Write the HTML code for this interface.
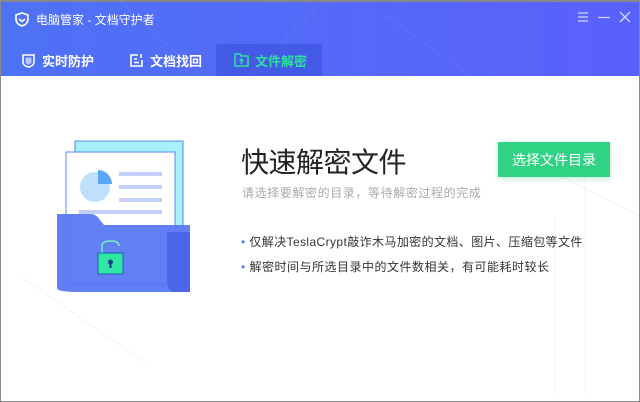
<!DOCTYPE html>
<html><head><meta charset="utf-8"><style>
*{margin:0;padding:0;box-sizing:border-box}
body{width:640px;height:402px;overflow:hidden;background:#fff;font-family:"Liberation Sans","Noto Sans CJK SC",sans-serif;position:relative}
.frame{position:absolute;inset:0;border:1px solid #8a8a8a;border-top:2px solid #888}
.hdr{position:absolute;left:1px;top:2px;width:638px;height:74px;background:linear-gradient(90deg,#4e72f6,#5a60fb);overflow:hidden}
.t{position:absolute;color:#fff;white-space:nowrap}
.tab{position:absolute;top:42px;height:32px;font-size:13px;font-weight:bold;color:#fff;display:flex;align-items:center}
.act{left:215px;width:106px;background:rgba(40,60,200,.35);color:#2ee0a0;padding-left:18px}
.main{position:absolute;color:#333;white-space:nowrap}
</style></head><body>
<div class="hdr">
<svg style="position:absolute;left:0;top:0" width="638" height="74"><g stroke="rgba(255,255,255,.08)" fill="none"><path d="M120 0 L200 74M250 74 L320 0M380 10 L470 74"/></g></svg>
<svg style="position:absolute;left:14px;top:10px" width="14" height="15" viewBox="0 0 14 15"><path d="M7 1 L13 3 V7 C13 11 10 13 7 14 C4 13 1 11 1 7 V3 Z" fill="none" stroke="#fff" stroke-width="1.6"/><path d="M4 7 L7 9.5 L10 7" fill="none" stroke="#fff" stroke-width="1.5"/></svg>
<div class="t" style="left:35px;top:9px;font-size:12px">电脑管家 - 文档守护者</div>
<svg style="position:absolute;left:574px;top:8px" width="60" height="14"><g stroke="#fff" stroke-opacity=".75" stroke-width="1.3" fill="none"><path d="M3 3 H13 M3 7 H13 M3 11 H13 M23 7.5 H35 M45 2 L55 12 M55 2 L45 12"/></g></svg>
<div class="tab" style="left:20px"><svg width="15" height="15" viewBox="0 0 15 15" style="margin-right:6px"><path d="M2 2 H13 V9 C13 12 10 13.5 7.5 14 C5 13.5 2 12 2 9 Z" fill="none" stroke="#fff" stroke-width="1.6"/><path d="M4.5 4.5 H10.5 V9 C10.5 10.5 9 11.5 7.5 11.8 C6 11.5 4.5 10.5 4.5 9Z" fill="#fff" opacity=".6"/></svg>实时防护</div>
<div class="tab" style="left:128px"><svg width="15" height="15" viewBox="0 0 15 15" style="margin-right:6px"><path d="M9 2 H2 V13 H13 V7" fill="none" stroke="#fff" stroke-width="1.6"/><path d="M5 6 H8 M5 9.5 H10 M12 1 V5" stroke="#fff" stroke-width="1.6"/></svg>文档找回</div>
<div class="tab act"><svg width="15" height="14" viewBox="0 0 15 14" style="margin-right:6px"><path d="M1 1 H6 L7 3 H14 V13 H1 Z" fill="none" stroke="#2ee0a0" stroke-width="1.6"/><path d="M7.5 11 V6 M5.5 8 L7.5 6 L9.5 8" stroke="#2ee0a0" stroke-width="1.5" fill="none"/></svg>文件解密</div>
</div>
<svg style="position:absolute;left:0;top:76px" width="640" height="326"><g stroke="#f3f4fa" fill="none"><path d="M20 200 L150 290M560 100 L640 140M555 140 L555 320M585 90 V320"/></g></svg>
<svg style="position:absolute;left:55px;top:140px" width="140" height="160" viewBox="55 140 140 160">
<rect x="75" y="141" width="108" height="144" fill="#a8f0fb" stroke="#5a84f5" stroke-width="1"/>
<rect x="66" y="152" width="109" height="132" fill="#fff" stroke="#5a84f5" stroke-width="1"/>
<circle cx="95" cy="187" r="15" fill="#bfe0fd"/>
<path d="M98 170 A14 14 0 0 1 112 184 H98 Z" fill="#5aa8f5"/>
<g fill="#c5cdfb"><rect x="119" y="172" width="43" height="4"/><rect x="119" y="185" width="43" height="4"/><rect x="119" y="198" width="43" height="4"/><rect x="79" y="210" width="83" height="4"/></g>
<path d="M57 214 H90 C95 214 97 216 100 220 L104 225 H190 V292 H80 Q57 292 57 288 Z" fill="#5a78f5" opacity=".95"/>
<path d="M167 232 V282 Q168 292 176 292 H190 V232 Z" fill="#4b66ea"/>
<path d="M102 253 V246 Q102 241 111 241 Q119 241 119 246" fill="none" stroke="#6ff0c8" stroke-width="1.5"/>
<rect x="98" y="253" width="25" height="21" fill="#2fe6a3" stroke="#1c5fb0" stroke-width="1"/>
<circle cx="110.5" cy="262" r="2.5" fill="#1a3c8a"/><rect x="109.5" y="263" width="2" height="5" fill="#1a3c8a"/>
</svg>
<div class="main" style="left:241px;top:141px;font-size:28px;color:#222;letter-spacing:-0.5px">快速解密文件</div>
<div style="position:absolute;left:498px;top:142px;width:112px;height:35px;background:#30d383;color:#fff;font-size:14px;display:flex;align-items:center;justify-content:center;box-shadow:0 2px 6px rgba(48,211,131,.3)">选择文件目录</div>
<div class="main" style="left:242px;top:184px;font-size:12px;color:#aaa;letter-spacing:0.6px">请选择要解密的目录，等待解密过程的完成</div>
<div class="main" style="left:241px;top:233px;font-size:12px;letter-spacing:0.4px"><span style="color:#5a78f5">•</span> 仅解决TeslaCrypt敲诈木马加密的文档、图片、压缩包等文件</div>
<div class="main" style="left:241px;top:258px;font-size:12px;letter-spacing:0.5px"><span style="color:#5a78f5">•</span> 解密时间与所选目录中的文件数相关，有可能耗时较长</div>
<div class="frame"></div>
</body></html>
